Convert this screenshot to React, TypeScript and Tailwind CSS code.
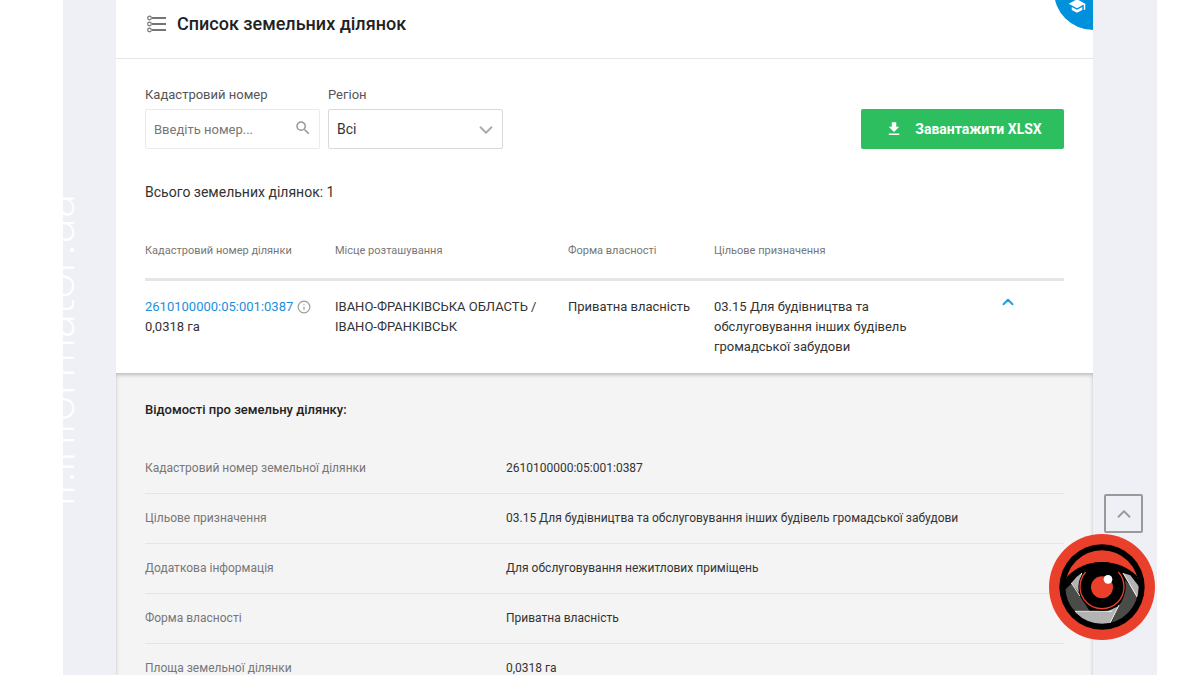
import { MdSchool, MdSearch, MdFileDownload } from 'react-icons/md';
import { ChevronDown, ChevronUp, Info } from 'lucide-react';

interface Detail {
  label: string;
  value: string;
}

const columns = [
  'Кадастровий номер ділянки',
  'Місце розташування',
  'Форма власності',
  'Цільове призначення',
];

const details: Detail[] = [
  { label: 'Кадастровий номер земельної ділянки', value: '2610100000:05:001:0387' },
  {
    label: 'Цільове призначення',
    value: '03.15 Для будівництва та обслуговування інших будівель громадської забудови',
  },
  { label: 'Додаткова інформація', value: 'Для обслуговування нежитлових приміщень' },
  { label: 'Форма власності', value: 'Приватна власність' },
  { label: 'Площа земельної ділянки', value: '0,0318 га' },
];

function ListIcon() {
  return (
    <svg className="w-5 h-5" viewBox="0 0 20 20" fill="none" stroke="#757575" aria-hidden="true">
      {[4, 10, 16].map((y) => (
        <g key={y}>
          <circle cx="2.5" cy={y} r="1.8" strokeWidth="1.2" />
          <path d={`M5 ${y}H19`} strokeWidth="2" />
        </g>
      ))}
    </svg>
  );
}

function EyeLogo() {
  return (
    <svg className="w-[106px] h-[106px]" viewBox="0 0 318 318" aria-hidden="true">
      <defs>
        <clipPath id="lens">
          <circle cx="159" cy="159" r="110" />
        </clipPath>
      </defs>
      <circle cx="159" cy="159" r="159" fill="#ea402b" />
      <circle cx="159" cy="159" r="128" fill="#000" />
      <g clipPath="url(#lens)">
        {/* eyelid */}
        <path d="M30 0H288V160Q230 84 159 84Q90 84 30 160Z" fill="#ea402b" />
        <path d="M54 128Q98 84 159 84Q220 84 264 126L278 148V200H40V148Z" fill="#000" />
        {/* shutter blades */}
        <path d="M40 175L67 149L92 183L122 232H79L60 215L40 200Z" fill="#4b4b49" />
        <path d="M67 147Q80 128 98 117Q90 145 93 180Z" fill="#b3b3b3" />
        <path d="M77 233H172L208 217L182 272L170 300H120Z" fill="#b3b3b3" />
        <path d="M208 217Q232 190 228 137L280 198V230L182 280Z" fill="#4b4b49" />
        <path d="M222 117L244 124L280 170V205L268 197Z" fill="#b3b3b3" />
        <g fill="none" stroke="#f3f3f3" strokeWidth="3">
          <path d="M67 147L93 186" />
          <path d="M98 117Q88 145 92 178" />
          <path d="M77 232H190" />
          <path d="M210 213L181 272" />
          <path d="M222 117L270 198" />
        </g>
      </g>
      <circle cx="159" cy="159" r="71" fill="#000" />
      <path d="M110 114A66 66 0 1 0 208 114" fill="none" stroke="#ea402b" strokeWidth="4" />
      <circle cx="159" cy="160" r="33" fill="#ea402b" />
      <circle cx="177" cy="136" r="13" fill="#fff" />
    </svg>
  );
}

export default function App() {
  return (
    <div className="relative min-h-screen bg-white pl-[63px] pr-[43px] font-['Roboto',sans-serif] text-[#333]">
      <div className="relative min-h-screen bg-[#eff0f6] pl-[53px] pr-16">
        <main className="relative min-h-screen overflow-hidden bg-white">
          <header className="flex items-center gap-2.5 h-[59px] pl-[31px] pb-2.5 border-b border-[#e5e5e5]">
            <ListIcon />
            <h1 className="text-lg font-medium text-[#222]">Список земельних ділянок</h1>
          </header>

          <a
            href="#help"
            aria-label="Довідка"
            className="absolute right-0 -top-[9px] flex w-[39px] h-[39px] pl-3.5 pt-1.5 rounded-bl-full bg-[#0091dc] text-white"
          >
            <MdSchool className="w-[18px] h-[18px]" />
          </a>

          <form className="flex items-end justify-between px-[29px] pt-[26px]">
            <div className="flex gap-2">
              <div className="w-[175px]">
                <label htmlFor="number" className="block mb-1 text-[13px] leading-5 text-[#555]">
                  Кадастровий номер
                </label>
                <div className="relative">
                  <input
                    id="number"
                    type="text"
                    placeholder="Введіть номер..."
                    className="block w-full h-10 pl-2 pr-8 border border-[#ebebeb] rounded-xs text-[13px] placeholder:text-[#777]"
                  />
                  <MdSearch className="absolute right-2 top-2.5 w-[18px] h-[18px] text-[#999]" />
                </div>
              </div>
              <div className="w-[175px]">
                <label htmlFor="region" className="block mb-1 text-[13px] leading-5 text-[#555]">
                  Регіон
                </label>
                <div className="relative">
                  <select
                    id="region"
                    className="block w-full h-10 px-2 border border-[#d9d9d9] rounded-xs bg-white text-sm appearance-none"
                  >
                    <option>Всі</option>
                  </select>
                  <ChevronDown className="pointer-events-none absolute right-1.5 top-2.5 w-[22px] h-[22px] text-[#aaa]" />
                </div>
              </div>
            </div>
            <button
              type="button"
              className="flex items-center justify-center gap-3 w-[203px] h-10 pl-0.5 rounded-xs bg-[#2dbe60] text-sm font-bold text-white"
            >
              <MdFileDownload className="w-[18px] h-[18px]" />
              Завантажити XLSX
            </button>
          </form>

          <p className="px-[29px] pt-[31px] text-sm leading-6">Всього земельних ділянок: 1</p>

          <div className="px-[29px] pt-[37px]">
            <table className="w-full table-fixed text-left">
              <colgroup>
                <col className="w-[190px]" />
                <col className="w-[233px]" />
                <col className="w-[146px]" />
                <col />
                <col className="w-[112px]" />
              </colgroup>
              <thead>
                <tr className="border-b-3 border-[#e5e5e5]">
                  {columns.map((name) => (
                    <th key={name} className="pb-[17px] text-[11px] leading-5 font-normal text-[#777]">
                      {name}
                    </th>
                  ))}
                  <td />
                </tr>
              </thead>
              <tbody className="text-[13px] leading-5 align-top">
                <tr>
                  <td className="py-4">
                    <span className="flex items-center gap-1">
                      <a href="#parcel" className="text-[#1d8fdb]">
                        2610100000:05:001:0387
                      </a>
                      <Info className="w-3.5 h-3.5 text-[#999]" strokeWidth={2} />
                    </span>
                    0,0318 га
                  </td>
                  <td className="py-4 pr-6">ІВАНО-ФРАНКІВСЬКА ОБЛАСТЬ / ІВАНО-ФРАНКІВСЬК</td>
                  <td className="py-4">Приватна власність</td>
                  <td className="py-4 pr-10">
                    03.15 Для будівництва та обслуговування інших будівель громадської забудови
                  </td>
                  <td className="pt-3">
                    <button type="button" aria-label="Згорнути" className="block mx-auto text-[#1d9fe0]">
                      <ChevronUp className="w-[18px] h-[18px]" strokeWidth={2.5} />
                    </button>
                  </td>
                </tr>
              </tbody>
            </table>
          </div>

          <section className="px-[29px] pt-[27px] bg-[#f4f4f4] shadow-[inset_0_3px_4px_-1px_rgba(0,0,0,0.2),inset_0_0_4px_rgba(0,0,0,0.08)]">
            <h2 className="pb-[23px] text-[13px] leading-5 font-medium text-[#222]">
              Відомості про земельну ділянку:
            </h2>
            <table className="w-full table-fixed text-xs leading-5 text-left">
              <tbody>
                {details.map((row) => (
                  <tr key={row.label} className="h-[50px] border-b border-[#e5e5e5]">
                    <th className="w-[361px] font-normal text-[#777]">{row.label}</th>
                    <td>{row.value}</td>
                  </tr>
                ))}
              </tbody>
            </table>
          </section>
        </main>

        {/* Site watermark */}
        <div className="absolute left-0 top-0 w-[52px] h-screen overflow-hidden">
          <span className="absolute -left-9 top-[194px] rotate-180 [writing-mode:vertical-rl] whitespace-nowrap font-['Open_Sans',sans-serif] font-light text-[45px] leading-[60px] text-white">
            if.informator.ua
          </span>
        </div>
      </div>

      <button
        type="button"
        aria-label="Вгору"
        className="fixed right-[57px] bottom-[142px] flex items-center justify-center w-[39px] h-[39px] border-2 border-[#999] rounded-xs text-[#999]"
      >
        <ChevronUp className="w-[22px] h-[22px] shrink-0" strokeWidth={2} />
      </button>
      <div className="fixed right-[45px] bottom-[35px]">
        <EyeLogo />
      </div>
    </div>
  );
}
